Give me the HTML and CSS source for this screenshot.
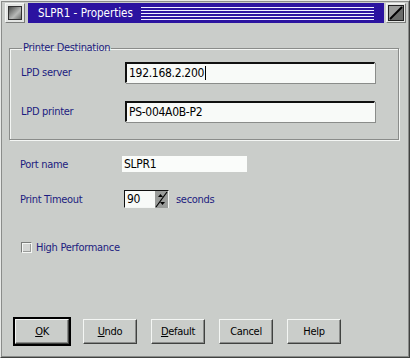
FILE: index.html
```html
<!DOCTYPE html>
<html lang="en">
<head>
    <meta charset="UTF-8">
    <title>SLPR1 - Properties</title>
    <link rel="stylesheet" href="styles.css">
</head>
<body>
    <div class="window">
        <div class="titlebar">
            <div class="sysmenu"><span class="sysmenu-face"></span></div>
            <div class="caption">
                <span class="title">SLPR1 - Properties</span>
                <span class="stripes"></span>
            </div>
            <div class="sizebtn">
                <svg width="16" height="16" viewBox="0 0 16 16">
                    <rect x="0.5" y="0.5" width="15" height="15" fill="#6a6c6a" stroke="#202020"/>
                    <polygon points="1,1 15,1 1,15" fill="#9a9c9a"/>
                    <line x1="2" y1="14" x2="14" y2="2" stroke="#000" stroke-width="2"/>
                </svg>
            </div>
        </div>

        <div class="client">
            <fieldset class="group">
                <legend>Printer Destination</legend>
                <div class="row">
                    <label class="label">LPD server</label>
                    <div class="entry">192.168.2.200<span class="cursor"></span></div>
                </div>
                <div class="row">
                    <label class="label">LPD printer</label>
                    <div class="entry">PS-004A0B-P2</div>
                </div>
            </fieldset>

            <div class="row port-row">
                <label class="label">Port name</label>
                <div class="readonly">SLPR1</div>
            </div>

            <div class="row timeout-row">
                <label class="label">Print Timeout</label>
                <div class="spin">
                    <div class="spin-entry">90</div>
                    <div class="spin-btn">
                        <svg width="13" height="17" viewBox="0 0 13 17">
                            <rect x="0" y="0" width="13" height="17" fill="#9a9c9a"/>
                            <line x1="1" y1="16" x2="12" y2="1" stroke="#000" stroke-width="1.2"/>
                            <polygon points="3,6 5.5,3 8,6" fill="#000"/>
                            <polygon points="5,11 7.5,14 10,11" fill="#000"/>
                        </svg>
                    </div>
                </div>
                <span class="units">seconds</span>
            </div>

            <div class="check-row">
                <span class="checkbox"></span>
                <span class="check-label">High Performance</span>
            </div>

            <div class="buttons">
                <button class="btn default-btn"><u>O</u>K</button>
                <button class="btn"><u>U</u>ndo</button>
                <button class="btn"><u>D</u>efault</button>
                <button class="btn">Cancel</button>
                <button class="btn">Help</button>
            </div>
        </div>
    </div>
</body>
</html>
```

FILE: styles.css
```css
body {
    margin: 0;
    font-family: "DejaVu Sans Condensed", "Liberation Sans", Arial, sans-serif;
    font-stretch: condensed;
    font-size: 11px;
    letter-spacing: -0.3px;
    background: #cacdca;
}

.window {
    width: 410px;
    height: 358px;
    box-sizing: border-box;
    background: #cacdca;
    border: 1px solid #e8eae8;
    border-right-color: #404240;
    border-bottom-color: #404240;
    box-shadow: inset -1px -1px 0 #8a8c8a, inset 1px 1px 0 #8a8c8a;
    padding: 2px 3px 0 4px;
}

/* title bar */
.titlebar {
    display: flex;
    align-items: center;
    height: 20px;
    gap: 2px;
}

.sysmenu {
    width: 20px;
    height: 20px;
    box-sizing: border-box;
    background: #e4e6e4;
    border: 1px solid #f4f6f4;
    border-right-color: #7a7c7a;
    border-bottom-color: #7a7c7a;
    display: flex;
    align-items: center;
    justify-content: center;
}

.sysmenu-face {
    width: 14px;
    height: 14px;
    box-sizing: border-box;
    border: 1px solid #303030;
    background: linear-gradient(135deg, #4a4c4a, #b8bab8 60%, #6a6c6a);
}

.caption {
    flex: 1;
    height: 20px;
    margin-left: 1px;
    background: #2b13a0;
    display: flex;
    align-items: center;
    padding: 0 10px 0 10px;
    gap: 8px;
}

.title {
    color: #fff;
    font-size: 11.5px;
    letter-spacing: 0;
}

.stripes {
    flex: 1;
    height: 14px;
    background: repeating-linear-gradient(to bottom, #2b13a0 0, #2b13a0 1px, #f0f0ff 1px, #f0f0ff 2px, #2b13a0 2px, #2b13a0 3px);
}

.sizebtn {
    width: 20px;
    height: 20px;
    box-sizing: border-box;
    background: #e4e6e4;
    border: 1px solid #f4f6f4;
    border-right-color: #7a7c7a;
    border-bottom-color: #7a7c7a;
    display: flex;
    align-items: center;
    justify-content: center;
}

/* client area */
.client {
    padding: 0 2px 0 2px;
}

.group {
    margin: 18px 5px 0 2px;
    padding: 7px 10px 17px 11px;
    border: 1px solid #8a8c8a;
    box-shadow: 1px 1px 0 #f4f6f4, inset 1px 1px 0 #f4f6f4;
}

.group legend {
    color: #1c1c80;
    padding: 0 1px;
    margin-left: 1px;
    line-height: 14px;
}

.row {
    display: flex;
    align-items: center;
}

.row + .row {
    margin-top: 18px;
}

.label {
    width: 104px;
    color: #1c1c80;
}

.entry {
    width: 250px;
    height: 21px;
    box-sizing: border-box;
    background: #f8faf8;
    border: 2px solid #101010;
    border-right: 1px solid #f8faf8;
    border-bottom: 1px solid #f8faf8;
    box-shadow: 1px 1px 0 #8a8c8a;
    padding-left: 2px;
    font-size: 12px;
    line-height: 18px;
    display: flex;
    align-items: center;
}

.cursor {
    width: 1px;
    height: 14px;
    background: #000;
    margin-left: 1px;
}

.port-row {
    margin: 16px 0 0 13px;
}

.port-row .label {
    width: 102px;
}

.readonly {
    width: 125px;
    height: 16px;
    background: #fafcfa;
    padding-left: 2px;
    box-sizing: border-box;
    line-height: 16px;
    font-size: 12px;
}

.timeout-row {
    margin: 22px 0 0 13px;
}

.timeout-row .label {
    width: 104px;
}

.spin {
    display: flex;
    height: 18px;
    box-sizing: border-box;
    border: 1px solid #101010;
    border-right-color: #f4f6f4;
    border-bottom-color: #f4f6f4;
}

.spin-entry {
    width: 30px;
    background: #f8faf8;
    padding-left: 2px;
    box-sizing: border-box;
    font-size: 12px;
    line-height: 16px;
}

.spin-btn {
    width: 13px;
    display: flex;
}

.units {
    margin-left: 7px;
    color: #1c1c80;
}

.check-row {
    display: flex;
    align-items: center;
    margin: 33px 0 0 14px;
    gap: 4px;
}

.checkbox {
    width: 11px;
    height: 11px;
    box-sizing: border-box;
    border: 1px solid #7a7c7a;
    border-right-color: #f4f6f4;
    border-bottom-color: #f4f6f4;
    background: #d4d6d4;
    box-shadow: inset 1px 1px 0 #f4f6f4, inset -1px -1px 0 #9a9c9a;
}

.check-label {
    color: #1c1c80;
}

/* push buttons */
.buttons {
    display: flex;
    gap: 14px;
    margin: 65px 0 0 8px;
}

.btn {
    width: 54px;
    height: 25px;
    box-sizing: border-box;
    font-family: inherit;
    font-stretch: inherit;
    font-size: 11px;
    letter-spacing: -0.3px;
    color: #000;
    background: #cacdca;
    border: 1px solid #f4f6f4;
    border-right-color: #404240;
    border-bottom-color: #404240;
    box-shadow: inset -1px -1px 0 #8a8c8a;
    padding: 0;
}

.default-btn {
    outline: 2px solid #000;
    outline-offset: 0;
}
```
